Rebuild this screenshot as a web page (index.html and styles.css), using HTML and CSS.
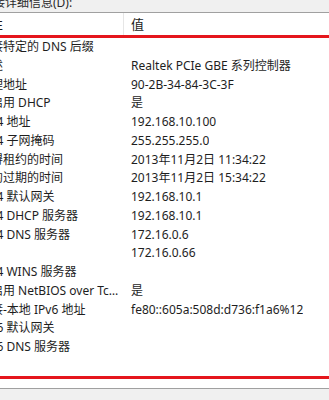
FILE: index.html
```html
<!DOCTYPE html>
<html lang="zh-CN">
	<head>
		<meta charset="UTF-8" />
		<title>网络连接详细信息</title>
		<link rel="stylesheet" href="styles.css">
	</head>
	<body>
		<div class="dialog">
			<div class="caption">连接详细信息(D):</div>
			<div class="listview">
				<div class="header">
					<div class="col col-name">属性</div>
					<div class="col col-value">值</div>
				</div>
				<div class="highlight">
					<div class="row"><span class="name">连接特定的 DNS 后缀</span><span class="value"></span></div>
					<div class="row"><span class="name">描述</span><span class="value">Realtek PCIe GBE 系列控制器</span></div>
					<div class="row"><span class="name">物理地址</span><span class="value">90-2B-34-84-3C-3F</span></div>
					<div class="row"><span class="name">已启用 DHCP</span><span class="value">是</span></div>
					<div class="row"><span class="name">IPv4 地址</span><span class="value">192.168.10.100</span></div>
					<div class="row"><span class="name">IPv4 子网掩码</span><span class="value">255.255.255.0</span></div>
					<div class="row"><span class="name">获得租约的时间</span><span class="value">2013年11月2日 11:34:22</span></div>
					<div class="row"><span class="name">租约过期的时间</span><span class="value">2013年11月2日 15:34:22</span></div>
					<div class="row"><span class="name">IPv4 默认网关</span><span class="value">192.168.10.1</span></div>
					<div class="row"><span class="name">IPv4 DHCP 服务器</span><span class="value">192.168.10.1</span></div>
					<div class="row"><span class="name">IPv4 DNS 服务器</span><span class="value">172.16.0.6</span></div>
					<div class="row"><span class="name"></span><span class="value">172.16.0.66</span></div>
					<div class="row"><span class="name">IPv4 WINS 服务器</span><span class="value"></span></div>
					<div class="row"><span class="name">已启用 NetBIOS over Tcpip</span><span class="value">是</span></div>
					<div class="row"><span class="name">连接-本地 IPv6 地址</span><span class="value">fe80::605a:508d:d736:f1a6%12</span></div>
					<div class="row"><span class="name">IPv6 默认网关</span><span class="value"></span></div>
					<div class="row"><span class="name">IPv6 DNS 服务器</span><span class="value"></span></div>
				</div>
				<div class="list-end"></div>
			</div>
		</div>
	</body>
</html>
```

FILE: styles.css
```css
html, body {
	margin: 0;
	height: 100%;
	overflow: hidden;
}
body {
	background-color: #f0f0f0;
	font-family: "Noto Sans", "Noto Sans CJK SC", sans-serif;
	font-size: 12px;
	color: #1e1e1e;
}
.dialog {
	width: 370px;
	margin-left: -23px;
}
.caption {
	height: 12px;
	line-height: 12px;
	margin-top: -3px;
	margin-bottom: 3px;
	padding-left: 4px;
	color: #2a2a2a;
}
.listview {
	background-color: #ffffff;
	border-top: 1px solid #a0a0a0;
	border-bottom: 1px solid #a0a0a0;
}
.header {
	display: flex;
	height: 22px;
	align-items: center;
	font-size: 13px;
	color: #1a1a1a;
}
.col-name {
	width: 147px;
	padding-left: 0;
	box-sizing: border-box;
	border-right: 1px solid #e6e6e6;
	height: 22px;
	line-height: 22px;
}
.col-value {
	padding-left: 7px;
	line-height: 22px;
}
.highlight {
	border-top: 3px solid #e5161c;
	border-bottom: 3px solid #e5161c;
	padding-bottom: 19px;
}
.row {
	display: flex;
	height: 18.75px;
	line-height: 18.75px;
	white-space: nowrap;
}
.name {
	width: 147px;
	padding-left: 2px;
	padding-right: 3px;
	box-sizing: border-box;
	overflow: hidden;
	text-overflow: ellipsis;
	flex: none;
}
.value {
	padding-left: 7px;
	overflow: hidden;
}
.list-end {
	height: 9px;
}
```
